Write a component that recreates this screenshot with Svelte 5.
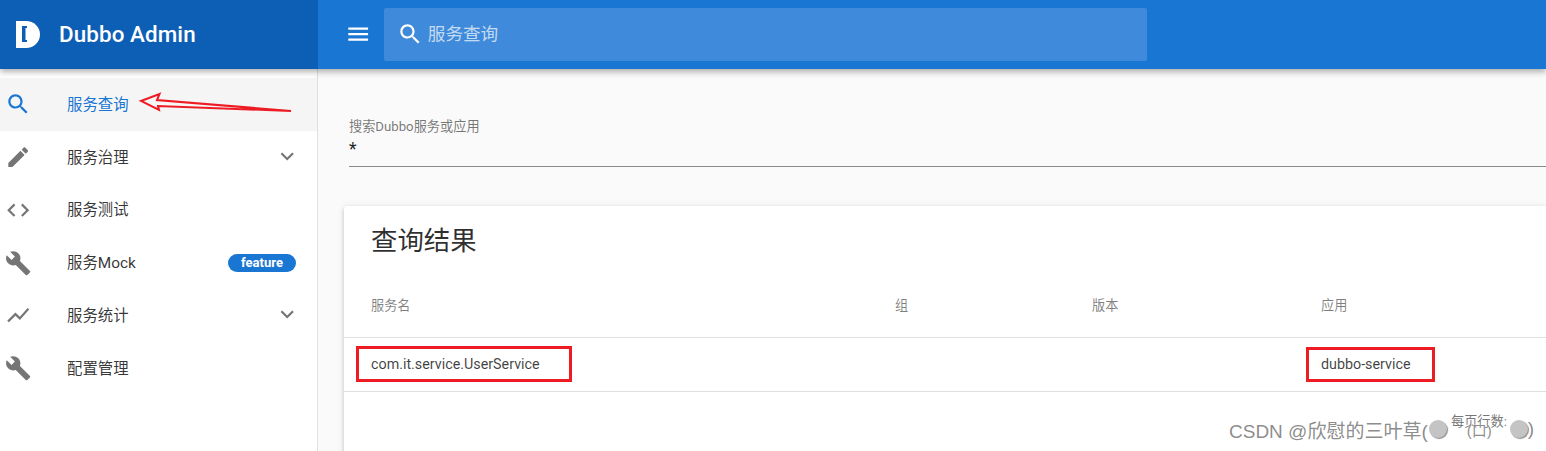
<script>
  const icons = {
    search: 'M15.5 14h-.79l-.28-.27C15.41 12.59 16 11.11 16 9.5 16 5.91 13.09 3 9.5 3S3 5.91 3 9.5 5.91 16 9.5 16c1.61 0 3.09-.59 4.23-1.57l.27.28v.79l5 4.99L20.49 19l-4.99-5zm-6 0C7.01 14 5 11.99 5 9.5S7.01 5 9.5 5 14 7.01 14 9.5 11.99 14 9.5 14z',
    edit: 'M3 17.25V21h3.75L17.81 9.94l-3.75-3.75L3 17.25zM20.71 7.04c.39-.39.39-1.02 0-1.41l-2.34-2.34c-.39-.39-1.02-.39-1.41 0l-1.83 1.83 3.75 3.75 1.83-1.83z',
    code: 'M9.4 16.6L4.8 12l4.6-4.6L8 6l-6 6 6 6 1.4-1.4zm5.2 0l4.6-4.6-4.6-4.6L16 6l6 6-6 6-1.4-1.4z',
    build: 'M22.7 19l-9.1-9.1c.9-2.3.4-5-1.5-6.9-2-2-5-2.4-7.4-1.3L9 6 6 9 1.6 4.7C.4 7.1.9 10.1 2.9 12.1c1.9 1.9 4.6 2.4 6.9 1.5l9.1 9.1c.4.4 1 .4 1.4 0l2.3-2.3c.5-.4.5-1.1.1-1.4z',
    chart: 'M3.5 18.49l6-6.01 4 4L22 6.92l-1.41-1.41-7.09 7.97-4-4L2 16.99z',
    down: 'M7.41 8.59L12 13.17l4.59-4.58L18 10l-6 6-6-6 1.41-1.41z',
    menu: 'M3 18h18v-2H3v2zm0-5h18v-2H3v2zm0-7v2h18V6H3z'
  };
  const items = [
    { icon: 'search', label: '服务查询', active: true },
    { icon: 'edit', label: '服务治理', arrow: true },
    { icon: 'code', label: '服务测试' },
    { icon: 'build', label: '服务Mock', badge: 'feature' },
    { icon: 'chart', label: '服务统计', arrow: true },
    { icon: 'build', label: '配置管理' }
  ];
</script>

<div class="page">
  <header class="toolbar">
    <div class="brand">
      <svg class="logo" viewBox="0 0 24 27" aria-hidden="true">
        <path d="M0 0H10C18 0 24 6 24 13.5S18 27 10 27H0Z" fill="#fff" />
        <path d="M11 5H6V21H11V19H9.500V7H11Z" fill="#0d5fb5" />
      </svg>
      <span class="brand-name">Dubbo Admin</span>
    </div>
    <div class="bar">
      <button class="menu-btn" aria-label="menu">
        <svg class="ic" viewBox="0 0 24 24"><path d={icons.menu} fill="#fff" /></svg>
      </button>
      <div class="searchbox">
        <svg class="ic" viewBox="0 0 24 24"><path d={icons.search} fill="#fff" /></svg>
        <span>服务查询</span>
      </div>
    </div>
  </header>

  <div class="body">
    <nav class="side">
      {#each items as it}
        <div class="item" class:active={it.active}>
          <svg class="ic" viewBox="0 0 24 24"><path d={icons[it.icon]} /></svg>
          <span class="label">{it.label}</span>
          {#if it.badge}<span class="badge">{it.badge}</span>{/if}
          {#if it.arrow}<svg class="ic chev" viewBox="0 0 24 24"><path d={icons.down} /></svg>{/if}
        </div>
      {/each}
    </nav>

    <main class="main">
      <div class="field">
        <div class="field-label">搜索Dubbo服务或应用</div>
        <div class="field-value">*</div>
      </div>
      <section class="card">
        <h2>查询结果</h2>
        <div class="row head">
          <span>服务名</span><span>组</span><span>版本</span><span>应用</span>
        </div>
        <div class="row data">
          <span>com.it.service.UserService</span><span></span><span></span><span>dubbo-service</span>
        </div>
        <div class="foot">每页行数:</div>
      </section>
    </main>
  </div>

  <svg class="arrow" viewBox="0 0 160 30" aria-hidden="true">
    <path d="M7 16L25.500 9L23 15L157 26L24 21L25 25Z" fill="#f7f7f7" stroke="#ed1c24" stroke-width="2" stroke-linejoin="miter" />
  </svg>
  <div class="box box-a"></div>
  <div class="box box-b"></div>
  <div class="mark">
    <span>CSDN @欣慰的三叶草(</span><i class="dot"></i><span class="brow">‾</span><span class="mouth">(口)</span><span class="brow">‾</span><i class="dot"></i><span>)</span>
  </div>
</div>

<style>
  :global(body) {
    margin: 0;
    background: #fafafa;
    overflow: hidden;
  }
  .page {
    position: relative;
    width: 1546px;
    height: 451px;
    overflow: hidden;
    font-family: Roboto, "Noto Sans CJK SC", sans-serif;
    background: #fafafa;
    color: rgba(0, 0, 0, 0.87);
  }
  .toolbar {
    position: relative;
    z-index: 2;
    display: flex;
    height: 69px;
    box-shadow: 0 3px 6px rgba(0, 0, 0, 0.3);
  }
  .brand {
    width: 318px;
    flex: none;
    display: flex;
    align-items: center;
    padding-left: 16px;
    box-sizing: border-box;
    background: #0d5fb5;
    color: #fff;
  }
  .logo {
    width: 24px;
    height: 27px;
    flex: none;
  }
  .brand-name {
    margin-left: 19px;
    padding-bottom: 2px;
    font-size: 22.4px;
    font-weight: 500;
    letter-spacing: 0.1px;
  }
  .bar {
    flex: 1;
    display: flex;
    align-items: center;
    background: #1976d2;
  }
  .ic {
    width: 26.4px;
    height: 26.4px;
    flex: none;
    display: block;
  }
  .menu-btn {
    border: 0;
    padding: 0;
    margin-left: 27px;
    background: none;
    display: block;
  }
  .searchbox {
    margin-left: 13px;
    width: 763px;
    height: 53px;
    margin-top: -1px;
    border-radius: 2px;
    background: #3f8ada;
    display: flex;
    align-items: center;
    padding-left: 13px;
    box-sizing: border-box;
    color: rgba(255, 255, 255, 0.7);
    font-size: 17.6px;
  }
  .searchbox span {
    margin-left: 4px;
    padding-bottom: 3px;
  }
  .body {
    display: flex;
    height: 382px;
  }
  .side {
    width: 318px;
    flex: none;
    box-sizing: border-box;
    padding-top: 9px;
    background: #fff;
    border-right: 1px solid #e0e0e0;
  }
  .item {
    height: 52.8px;
    display: flex;
    align-items: center;
    padding: 0 21px 0 5px;
    font-size: 15.4px;
    color: rgba(0, 0, 0, 0.8);
  }
  .item .ic path {
    fill: #757575;
  }
  .item.active {
    background: #f5f5f5;
    color: #1976d2;
  }
  .item.active .ic path {
    fill: #1976d2;
  }
  .label {
    margin-left: 35.6px;
    flex: 1;
    padding-bottom: 3px;
  }
  .item .chev {
    margin-right: -4px;
    margin-top: -2px;
  }
  .badge {
    width: 68px;
    height: 18px;
    border-radius: 9px;
    background: #1976d2;
    color: #fff;
    font-size: 13px;
    font-weight: 700;
    line-height: 18px;
    text-align: center;
    flex: none;
  }
  .main {
    flex: 1;
    min-width: 0;
    padding: 49px 0 0 26px;
  }
  .field {
    margin-left: 5px;
    height: 49px;
    box-sizing: border-box;
    border-bottom: 1px solid #8a8a8a;
  }
  .field-label {
    font-size: 13.2px;
    line-height: 17px;
    color: rgba(0, 0, 0, 0.54);
  }
  .field-value {
    font-size: 17.6px;
    line-height: 26px;
    margin-top: 1px;
  }
  .card {
    margin-top: 39px;
    background: #fff;
    border-radius: 3px 0 0 0;
    box-shadow: 0 2px 4px rgba(0, 0, 0, 0.18), 0 1px 8px rgba(0, 0, 0, 0.08);
    height: 300px;
  }
  h2 {
    margin: 0;
    padding: 16px 0 0 27px;
    font-size: 26.4px;
    line-height: 38px;
    font-weight: 400;
    color: rgba(0, 0, 0, 0.82);
  }
  .row {
    display: grid;
    grid-template-columns: 524px 197px 229px 1fr;
    padding-left: 27px;
    align-items: center;
    box-sizing: border-box;
    border-bottom: 1px solid #e0e0e0;
  }
  .head {
    height: 78px;
    padding-top: 11px;
    font-size: 13.2px;
    color: rgba(0, 0, 0, 0.5);
  }
  .data {
    height: 54px;
    padding-bottom: 2px;
    font-size: 14.3px;
    color: rgba(0, 0, 0, 0.75);
  }
  .foot {
    margin-left: 1107px;
    margin-top: 22px;
    width: 60px;
    font-size: 13.2px;
    line-height: 16px;
    color: rgba(0, 0, 0, 0.54);
    white-space: nowrap;
  }
  .arrow {
    position: absolute;
    left: 134px;
    top: 85px;
    width: 160px;
    height: 30px;
    z-index: 3;
  }
  .box {
    position: absolute;
    box-sizing: border-box;
    border: 3px solid #ed1c24;
    z-index: 3;
  }
  .box-a {
    left: 356px;
    top: 346px;
    width: 216px;
    height: 36px;
  }
  .box-b {
    left: 1306px;
    top: 347px;
    width: 129px;
    height: 35px;
  }
  .mark {
    position: absolute;
    left: 1229px;
    top: 415px;
    z-index: 4;
    display: flex;
    align-items: center;
    height: 28px;
    font-family: "Liberation Sans", "Noto Sans CJK SC", sans-serif;
    font-size: 19px;
    white-space: nowrap;
    color: rgba(110, 110, 110, 0.8);
    text-shadow: 0 0 1px #fff;
  }
  .dot {
    width: 18px;
    height: 18px;
    flex: none;
    border-radius: 50%;
    margin-left: 1px;
    background: #c4c4c4;
    box-shadow: 1px 1px 1px #8d8d8d;
  }
  .brow {
    width: 20px;
    text-align: center;
    flex: none;
  }
  .mouth {
    width: 22px;
    flex: none;
    font-size: 15px;
    text-align: center;
  }
</style>
